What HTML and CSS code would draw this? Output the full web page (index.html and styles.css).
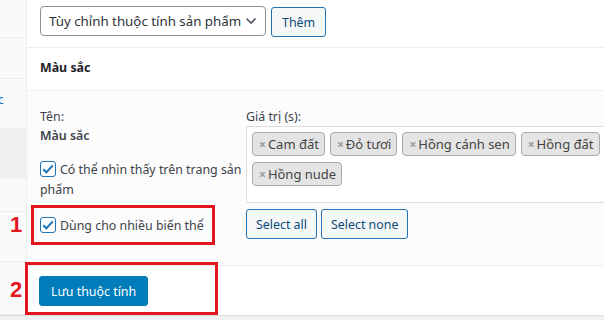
FILE: index.html
```html
<!DOCTYPE html>
<html lang="vi">
<head>
<meta charset="utf-8">
<link rel="stylesheet" href="styles.css">
</head>
<body>
<div class="page">
  <aside class="sidebar">
    <div class="srow h37"></div>
    <div class="srow h41"></div>
    <div class="srow h51"><span class="frag">c</span></div>
    <div class="srow h51 grey"></div>
    <div class="srow h32"></div>
    <div class="srow h50"></div>
    <div class="srow h53"></div>
    <div class="srow rest"></div>
  </aside>
  <main class="main">
    <div class="toolbar">
      <div class="select">Tùy chỉnh thuộc tính sản phẩm
        <svg class="chev" width="12" height="8" viewBox="0 0 12 8"><path d="M1.5 1.5 L6 6 L10.5 1.5" fill="none" stroke="#50575e" stroke-width="1.6"/></svg>
      </div>
      <button class="btn">Thêm</button>
    </div>
    <div class="heading">Màu sắc</div>
    <div class="attr">
      <div class="left">
        <div class="label">Tên:</div>
        <div class="name">Màu sắc</div>
        <label class="check vis"><span class="cb"><svg width="12" height="10" viewBox="0 0 12 10"><path d="M1.2 5.2 L4.4 8.3 L10.8 1.4" fill="none" stroke="#1e73b5" stroke-width="2"/></svg></span>Có thể nhìn thấy trên trang sản phẩm</label>
        <label class="check var"><span class="cb"><svg width="12" height="10" viewBox="0 0 12 10"><path d="M1.2 5.2 L4.4 8.3 L10.8 1.4" fill="none" stroke="#1e73b5" stroke-width="2"/></svg></span>Dùng cho nhiều biến thể</label>
      </div>
      <div class="right">
        <div class="label">Giá trị (s):</div>
        <div class="values">
          <span class="tag"><span class="x">×</span>Cam đất</span>
          <span class="tag"><span class="x">×</span>Đỏ tươi</span>
          <span class="tag"><span class="x">×</span>Hồng cánh sen</span>
          <span class="tag"><span class="x">×</span>Hồng đất</span>
          <span class="tag"><span class="x">×</span>Hồng nude</span>
        </div>
        <div class="btns">
          <button class="btn sel">Select all</button>
          <button class="btn sel">Select none</button>
        </div>
      </div>
    </div>
    <div class="footer">
      <button class="primary">Lưu thuộc tính</button>
    </div>
  </main>
  <div class="mark box1"></div>
  <div class="mark box2"></div>
  <span class="num n1">1</span>
  <span class="num n2">2</span>
</div>
</body>
</html>
```
FILE: styles.css
```css
* { box-sizing: border-box; }
html, body { margin: 0; padding: 0; }
body {
  width: 604px;
  height: 320px;
  overflow: hidden;
  background: #f0f0f1;
  font-family: "Noto Sans", "Open Sans", sans-serif;
  font-size: 12.4px;
  color: #3c434a;
}
.page {
  position: relative;
  display: flex;
  height: 316px;
  border-bottom: 1px solid #dcdcde;
  background: #fff;
}
.sidebar {
  width: 27px;
  flex: none;
  background: #fafafa;
  border-right: 1px solid #eee;
  display: flex;
  flex-direction: column;
}
.srow { border-bottom: 1px solid #eee; position: relative; }
.h37 { height: 38px; }
.h41 { height: 41px; }
.h51 { height: 50px; }
.grey { background: #f0f0f0; height: 51px; border-bottom: none; }
.h32 { height: 33px; }
.h50 { height: 50px; }
.h53 { height: 53px; }
.rest { flex: 1; border-bottom: none; }
.frag {
  position: absolute;
  left: -2px;
  top: 12px;
  font-size: 12px;
  color: #2271b1;
}
.main {
  flex: 1;
  display: flex;
  flex-direction: column;
  min-width: 0;
}
.toolbar {
  height: 48px;
  display: flex;
  align-items: flex-start;
  gap: 5px;
  padding: 6px 0 0 13px;
  border-bottom: 1px solid #eee;
  background: #fff;
}
.select {
  width: 226px;
  height: 30px;
  border: 1px solid #8c8f94;
  border-radius: 4px;
  display: flex;
  align-items: center;
  justify-content: space-between;
  padding: 0 12px 0 8px;
  font-size: 13.3px;
  color: #2c3338;
  white-space: nowrap;
}
.chev { flex: none; margin-left: 4px; }
.btn {
  font-family: inherit;
  font-size: 12.4px;
  color: #0a4b78;
  background: #f6f7f7;
  border: 1px solid #2271b1;
  border-radius: 3px;
  height: 30px;
  padding: 0 10px;
  margin-top: 1px;
  cursor: pointer;
}
.heading {
  height: 43px;
  display: flex;
  align-items: center;
  padding: 0 0 3px 13px;
  font-weight: 700;
  font-size: 12.4px;
  color: #1d2327;
  border-bottom: 1px solid #eee;
  background: #fff;
}
.attr {
  height: 175px;
  background: #fcfcfc;
  border-bottom: 1px solid #eee;
  display: flex;
  padding: 17px 0 0 13px;
}
.left { width: 206px; flex: none; }
.label { line-height: 18px; color: #3c434a; }
.name { font-weight: 600; line-height: 18px; margin-top: 1px; }
.check {
  display: block;
  line-height: 20px;
  position: relative;
}
.cb {
  display: inline-block;
  width: 16px;
  height: 16px;
  border: 1.5px solid #2271b1;
  border-radius: 3px;
  background: #fff;
  vertical-align: -3px;
  margin-right: 4px;
  position: relative;
}
.cb svg { position: absolute; left: 1px; top: 2px; }
.vis { margin-top: 15px; }
.var { margin-top: 16px; }
.right { flex: 1; min-width: 0; }
.values {
  height: 77px;
  margin-right: -20px;
  border: 1px solid #ddd;
  background: #fff;
  padding: 5px 5px;
  display: flex;
  flex-wrap: wrap;
  align-content: flex-start;
  gap: 6px 5px;
}
.tag {
  height: 24px;
  line-height: 22px;
  background: #e4e4e4;
  border: 1px solid #aaa;
  border-radius: 4px;
  padding: 0 5px 0 6px;
  font-size: 13px;
  color: #444;
  white-space: nowrap;
}
.x { color: #999; font-weight: 700; margin-right: 2px; font-size: 12px; }
.btns { display: flex; gap: 4px; margin-top: 6px; }
.sel { margin-top: 0; padding: 0 9px; }
.footer {
  flex: 1;
  padding: 10px 0 0 12px;
  background: #fff;
}
.primary {
  font-family: inherit;
  font-size: 12.4px;
  color: #fff;
  background: #007cba;
  border: 1px solid #007cba;
  border-radius: 3px;
  height: 30px;
  padding: 0 11px;
}
.mark {
  position: absolute;
  border: 3px solid #e3151f;
}
.box1 { left: 31px; top: 205px; width: 184px; height: 40px; }
.box2 { left: 25px; top: 262px; width: 193px; height: 53px; }
.num {
  position: absolute;
  color: #e3151f;
  font-family: "Liberation Sans", sans-serif;
  font-weight: 700;
  font-size: 22px;
  line-height: 1;
}
.n1 { left: 10px; top: 214px; }
.n2 { left: 10px; top: 279px; }
```
